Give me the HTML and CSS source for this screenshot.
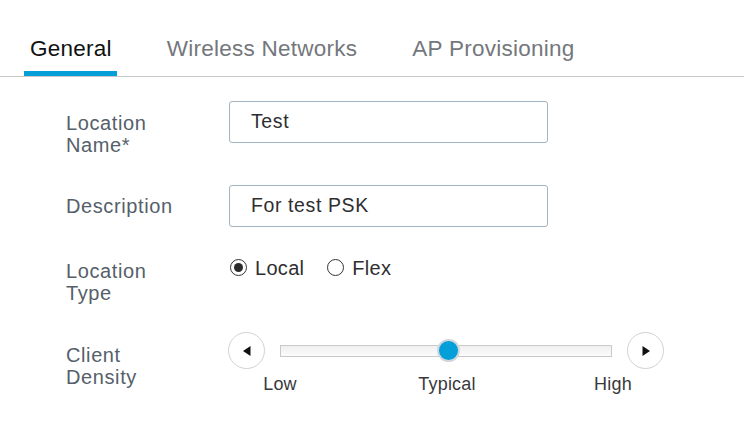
FILE: index.html
```html
<!DOCTYPE html>
<html>
<head>
<meta charset="utf-8">
<link rel="stylesheet" href="styles.css">
</head>
<body>
<div class="tabs">
  <div class="tab active">General</div>
  <div class="tab">Wireless Networks</div>
  <div class="tab">AP Provisioning</div>
</div>
<div class="form">
  <div class="row row1">
    <div class="label l1">Location<br>Name*</div>
    <input class="text-input" type="text" value="Test">
  </div>
  <div class="row row2">
    <div class="label l2">Description</div>
    <input class="text-input" type="text" value="For test PSK">
  </div>
  <div class="row row3">
    <div class="label l3">Location<br>Type</div>
    <div class="radios">
      <label class="radio"><span class="dot checked"></span>Local</label>
      <label class="radio"><span class="dot"></span>Flex</label>
    </div>
  </div>
  <div class="row row4">
    <div class="label l4">Client<br>Density</div>
    <div class="slider">
      <div class="slider-line">
        <div class="arrow-btn"><svg width="10" height="12" viewBox="0 0 10 12"><path d="M1 6 L8.5 1 L8.5 11 Z" fill="#111"/></svg></div>
        <div class="track"><div class="thumb"></div></div>
        <div class="arrow-btn"><svg width="10" height="12" viewBox="0 0 10 12"><path d="M9 6 L1.5 1 L1.5 11 Z" fill="#111"/></svg></div>
      </div>
      <div class="ticks">
        <span class="tick t-low">Low</span>
        <span class="tick t-typ">Typical</span>
        <span class="tick t-high">High</span>
      </div>
    </div>
  </div>
</div>
</body>
</html>
```
FILE: styles.css
```css
html, body {
  margin: 0;
  padding: 0;
  background: #fff;
  font-family: "Liberation Sans", Arial, sans-serif;
}
.tabs {
  display: flex;
  gap: 44px;
  padding: 36px 0 0 24px;
  border-bottom: 1px solid #c9c9c9;
}
.tab {
  font-size: 22.5px;
  line-height: 26px;
  letter-spacing: 0.25px;
  padding: 0 5px 9px 6px;
  border-bottom: 5px solid transparent;
  color: #74777c;
}
.tab.active {
  color: #111;
  border-bottom-color: #049fd9;
}
.form {
  padding: 24px 0 0 66px;
}
.row {
  display: flex;
  align-items: flex-start;
}
.label {
  width: 163px;
  font-size: 20px;
  line-height: 22px;
  letter-spacing: 0.6px;
  color: #55606a;
}
.row1 .label { padding-top: 11px; }
.row2 { margin-top: 29px; }
.row2 .label { padding-top: 10px; }
.row3 { margin-top: 30px; }
.row3 .label { padding-top: 3px; }
.row4 { margin-top: 28px; }
.row4 .label { padding-top: 12px; }
.text-input {
  box-sizing: border-box;
  width: 319px;
  height: 42px;
  margin: 0;
  border: 1px solid #a3b3c0;
  border-radius: 3px;
  padding: 0 0 2px 21px;
  font-family: "Liberation Sans", Arial, sans-serif;
  font-size: 19.5px;
  letter-spacing: 0.6px;
  color: #2e2e30;
  outline: none;
}
.radios {
  display: flex;
  gap: 23px;
  font-size: 20px;
  line-height: 22px;
  letter-spacing: 0.3px;
  color: #2f2f31;
  padding-left: 1px;
}
.radio {
  display: flex;
  align-items: center;
  gap: 8px;
}
.dot {
  box-sizing: border-box;
  width: 17px;
  height: 17px;
  border: 1.5px solid #333;
  border-radius: 50%;
  display: flex;
  align-items: center;
  justify-content: center;
  margin-top: -2px;
}
.dot.checked::after {
  content: "";
  width: 9px;
  height: 9px;
  border-radius: 50%;
  background: #2b2b2b;
}
.slider {
  margin-left: -1px;
}
.slider-line {
  display: flex;
  align-items: center;
}
.arrow-btn {
  box-sizing: border-box;
  width: 37px;
  height: 37px;
  border: 1px solid #d2d2d2;
  border-radius: 50%;
  display: flex;
  align-items: center;
  justify-content: center;
  background: #fff;
}
.track {
  position: relative;
  box-sizing: border-box;
  width: 332px;
  height: 12px;
  margin: 0 15px;
  border: 1px solid #c9c9c9;
  background: linear-gradient(#f0f0f0, #fbfbfb);
}
.thumb {
  position: absolute;
  left: 156px;
  top: -7px;
  box-sizing: border-box;
  width: 23px;
  height: 23px;
  border-radius: 50%;
  background: #049fd9;
  border: 2px solid #cfd6dc;
}
.ticks {
  position: relative;
  height: 22px;
  margin-top: 4px;
  font-size: 18px;
  line-height: 22px;
  letter-spacing: 0.2px;
  color: #39393b;
}
.tick {
  position: absolute;
  top: 0;
  transform: translateX(-50%);
}
.t-low { left: 52px; }
.t-typ { left: 219px; }
.t-high { left: 385px; }
```
